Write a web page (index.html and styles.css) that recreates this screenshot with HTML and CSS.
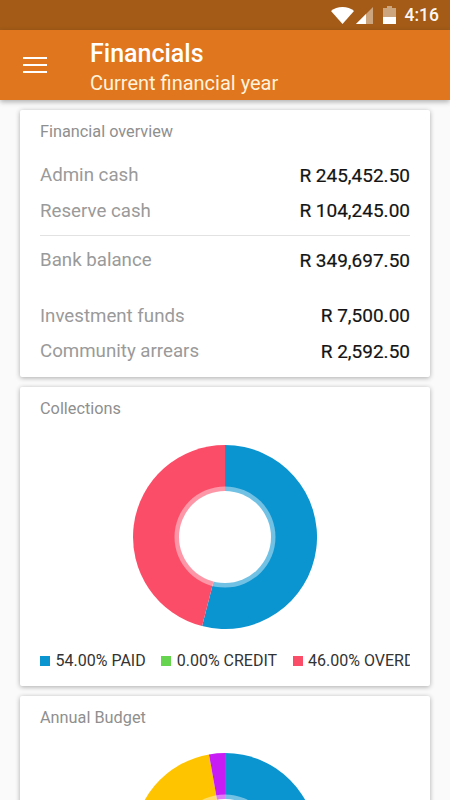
FILE: index.html
```html
<!DOCTYPE html>
<html lang="en">
<head>
<meta charset="utf-8">
<title>Financials</title>
<link rel="stylesheet" href="styles.css">
</head>
<body>
<div class="phone">
  <div class="statusbar">
    <svg class="st-wifi" viewBox="0 0 23 17"><path d="M0 4C3 1.500 7 0 11.500 0S20 1.500 23 4L11.500 17z" fill="#fff"/></svg>
    <svg class="st-signal" viewBox="0 0 17 17"><path d="M17 0v17H0z" fill="#fff" fill-opacity=".45"/><path d="M10 7v10H0z" fill="#fff"/></svg>
    <svg class="st-batt" viewBox="0 0 13 18"><path d="M4 0h5v2h4v16H0V2h4z" fill="#fff" fill-opacity=".45"/><path d="M0 11h13v7H0z" fill="#fff"/></svg>
    <span class="st-time">4:16</span>
  </div>
  <header class="appbar">
    <svg class="menu" viewBox="0 0 24 16"><path d="M0 1h24M0 8h24M0 15h24" stroke="#fff" stroke-width="2" fill="none"/></svg>
    <div class="titles">
      <div class="title">Financials</div>
      <div class="subtitle">Current financial year</div>
    </div>
  </header>
  <main class="content">
    <section class="card overview">
      <h2 class="card-title">Financial overview</h2>
      <div class="rows">
        <div class="row"><span>Admin cash</span><b>R 245,452.50</b></div>
        <div class="row"><span>Reserve cash</span><b>R 104,245.00</b></div>
        <div class="divider"></div>
        <div class="row"><span>Bank balance</span><b>R 349,697.50</b></div>
        <div class="spacer"></div>
        <div class="row"><span>Investment funds</span><b>R 7,500.00</b></div>
        <div class="row"><span>Community arrears</span><b>R 2,592.50</b></div>
      </div>
    </section>
    <section class="card collections">
      <h2 class="card-title">Collections</h2>
      <svg class="pie" viewBox="-92 -92 184 184">
        <path d="M0 -92A92 92 0 1 1 -22.900 89.100L0 0z" fill="#0a94d0"/>
        <path d="M-22.900 89.100A92 92 0 0 1 0 -92L0 0z" fill="#fb4d68"/>
        <circle r="50.500" fill="#fff" fill-opacity=".42"/>
        <circle r="46" fill="#fff"/>
      </svg>
      <div class="legend">
        <span class="item"><i class="sw blue"></i>54.00% PAID</span>
        <span class="item"><i class="sw green"></i>0.00% CREDIT</span>
        <span class="item"><i class="sw red"></i>46.00% OVERDUE</span>
      </div>
    </section>
    <section class="card budget">
      <h2 class="card-title">Annual Budget</h2>
      <svg class="pie" viewBox="-92 -92 184 184">
        <path d="M0 -92A92 92 0 0 1 92 0L0 0z" fill="#0a94d0"/>
        <path d="M-92 0A92 92 0 0 1 -16 -90.600L0 0z" fill="#ffc400"/>
        <path d="M-16 -90.600A92 92 0 0 1 0 -92L0 0z" fill="#c81cf5"/>
        <circle r="50.500" fill="#fff" fill-opacity=".42"/>
        <circle r="46" fill="#fff"/>
      </svg>
    </section>
  </main>
</div>
</body>
</html>
```
FILE: styles.css
```css
* { box-sizing: border-box; }
html, body { margin: 0; padding: 0; height: 100%; overflow: hidden; }
body { font-family: Roboto, "Noto Sans", sans-serif; background: #fafafa; }
.phone { width: 450px; height: 800px; overflow: hidden; display: flex; flex-direction: column; }
.statusbar { height: 30px; background: #a35b17; display: flex; align-items: center; justify-content: flex-end; padding-right: 11px; flex: none; }
.st-wifi { width: 23px; height: 17px; margin-right: 2px; }
.st-signal { width: 17px; height: 17px; margin-right: 10px; }
.st-batt { width: 13px; height: 18px; margin-right: 9px; }
.st-time { color: #fff; font-size: 17.500px; font-weight: 500; opacity: .95; }
.appbar { height: 70px; background: #e0761e; display: flex; align-items: center; flex: none; padding-left: 23px; box-shadow: 0 2px 5px rgba(0,0,0,.3); position: relative; z-index: 1; color: #fff; }
.menu { width: 24px; height: 16px; margin-right: 43px; }
.title { font-size: 25px; font-weight: 500; line-height: 30px; margin-bottom: -1px; }
.subtitle { font-size: 20px; line-height: 30px; color: #fff3dc; }
.titles { margin-top: 7px; }
.content { padding: 10px 20px 0; display: flex; flex-direction: column; gap: 10px; }
.card { background: #fff; border-radius: 2px; box-shadow: 0 1px 5px rgba(0,0,0,.32); padding: 13px 20px 0; flex: none; }
.card-title { margin: 0; font-size: 16.300px; font-weight: 400; color: #8f8f8f; line-height: 18px; }
.overview { height: 267px; }
.rows { margin-top: 16.500px; }
.row { display: flex; justify-content: space-between; align-items: center; height: 35.500px; font-size: 18.700px; color: #9a9a9a; }
.row b { font-weight: 400; font-size: 19px; color: #141414; -webkit-text-stroke: 0.2px #141414; }
.divider { height: 1px; background: #e2e2e2; margin: 6px 0 7px; }
.spacer { height: 20px; }
.collections { height: 299px; }
.pie { display: block; width: 184px; height: 184px; margin: 27px auto 0; }
.legend { display: flex; margin-top: 22px; gap: 15.500px; overflow: hidden; white-space: nowrap; font-size: 16px; color: #333; line-height: 20px; }
.item { display: flex; align-items: center; flex: none; }
.sw { width: 10px; height: 10px; margin-right: 5.500px; flex: none; }
.blue { background: #0a94d0; }
.green { background: #66d44f; }
.red { background: #fb4d68; }
.budget { height: 300px; }
.budget .pie { margin-top: 26px; }
```
